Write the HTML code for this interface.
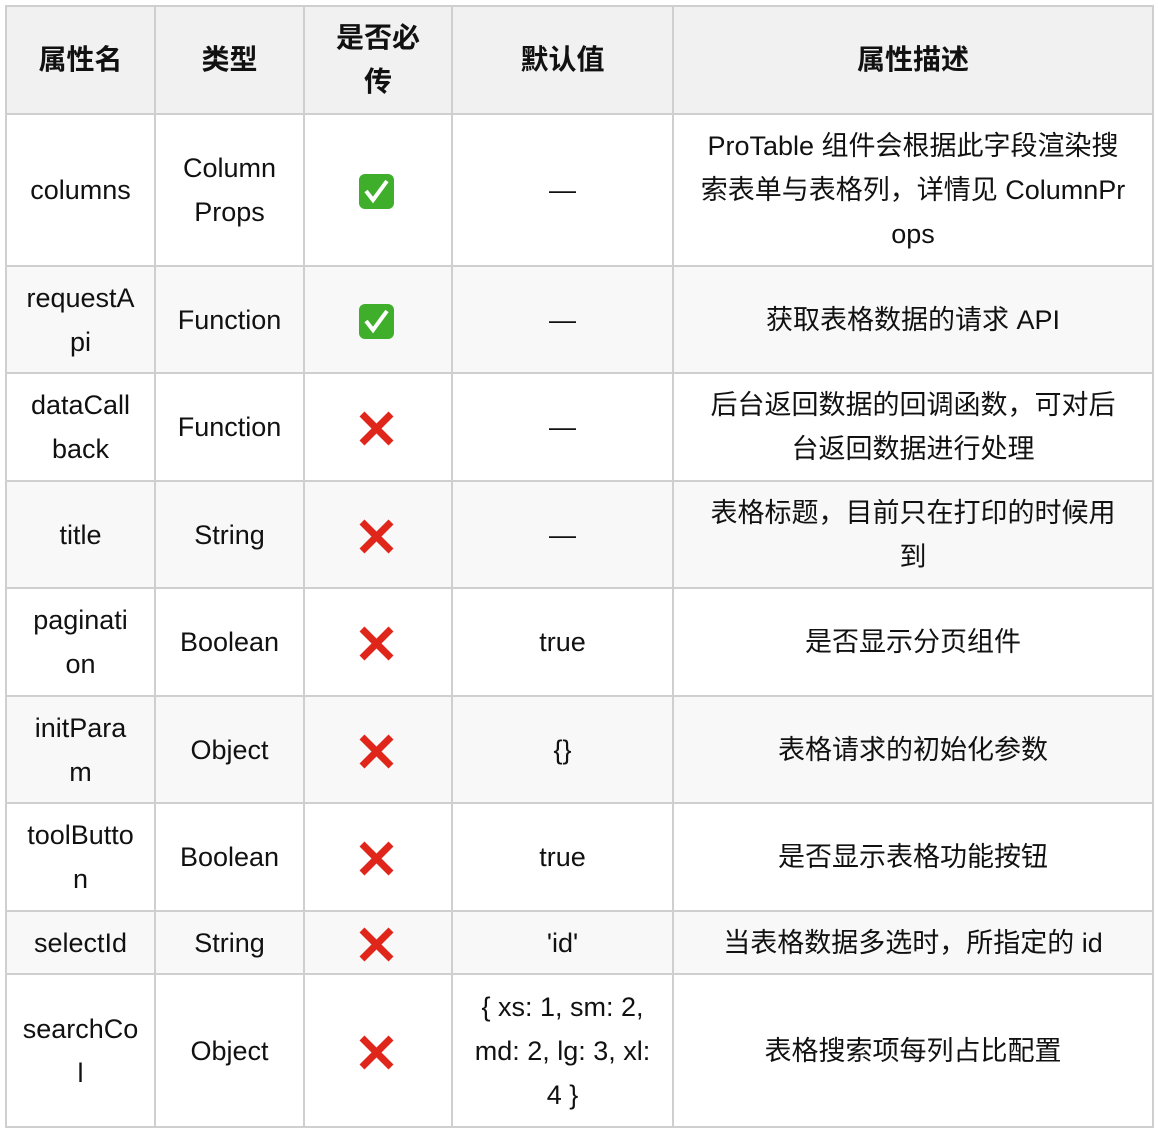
<!DOCTYPE html>
<html><head><meta charset="utf-8"><style>
body{margin:0;background:#fff;}
table{position:absolute;left:5px;top:5px;border-collapse:collapse;table-layout:fixed;width:1147px;font-family:"Liberation Sans","Noto Sans CJK SC",sans-serif;font-size:27px;color:#111;}
td,th{border:2px solid #cfcfcf;text-align:center;vertical-align:middle;padding:0;line-height:44px;white-space:nowrap;overflow:hidden;}
th{background:#f1f1f1;font-weight:bold;font-size:28px;}
tr.g td{background:#f8f8f8;}
.ck{display:inline-block;width:35px;height:35px;vertical-align:middle;margin-left:-4px}
</style></head><body>
<table>
<colgroup><col style="width:149px"><col style="width:149px"><col style="width:148px"><col style="width:221px"><col style="width:480px"></colgroup>
<tr style="height:108px"><th>属性名</th><th>类型</th><th>是否必<br>传</th><th>默认值</th><th>属性描述</th></tr>
<tr style="height:152px"><td>columns</td><td>Column<br>Props</td><td><svg class="ck" viewBox="0 0 35 35"><rect x="0" y="0" width="35" height="35" rx="6" fill="#3fae2a"/><path d="M7 17 L14 26 L28 7" stroke="#fff" stroke-width="4" fill="none"/></svg></td><td>—</td><td>ProTable 组件会根据此字段渲染搜<br>索表单与表格列，详情见 ColumnPr<br>ops</td></tr>
<tr class="g" style="height:107px"><td>requestA<br>pi</td><td>Function</td><td><svg class="ck" viewBox="0 0 35 35"><rect x="0" y="0" width="35" height="35" rx="6" fill="#3fae2a"/><path d="M7 17 L14 26 L28 7" stroke="#fff" stroke-width="4" fill="none"/></svg></td><td>—</td><td>获取表格数据的请求 API</td></tr>
<tr style="height:108px"><td>dataCall<br>back</td><td>Function</td><td><svg class="ck" viewBox="0 0 35 35"><path d="M3 3L32 32M32 3L3 32" stroke="#e0261b" stroke-width="7"/></svg></td><td>—</td><td>后台返回数据的回调函数，可对后<br>台返回数据进行处理</td></tr>
<tr class="g" style="height:107px"><td>title</td><td>String</td><td><svg class="ck" viewBox="0 0 35 35"><path d="M3 3L32 32M32 3L3 32" stroke="#e0261b" stroke-width="7"/></svg></td><td>—</td><td>表格标题，目前只在打印的时候用<br>到</td></tr>
<tr style="height:108px"><td>paginati<br>on</td><td>Boolean</td><td><svg class="ck" viewBox="0 0 35 35"><path d="M3 3L32 32M32 3L3 32" stroke="#e0261b" stroke-width="7"/></svg></td><td>true</td><td>是否显示分页组件</td></tr>
<tr class="g" style="height:107px"><td>initPara<br>m</td><td>Object</td><td><svg class="ck" viewBox="0 0 35 35"><path d="M3 3L32 32M32 3L3 32" stroke="#e0261b" stroke-width="7"/></svg></td><td>{}</td><td>表格请求的初始化参数</td></tr>
<tr style="height:108px"><td>toolButto<br>n</td><td>Boolean</td><td><svg class="ck" viewBox="0 0 35 35"><path d="M3 3L32 32M32 3L3 32" stroke="#e0261b" stroke-width="7"/></svg></td><td>true</td><td>是否显示表格功能按钮</td></tr>
<tr class="g" style="height:63px"><td>selectId</td><td>String</td><td><svg class="ck" viewBox="0 0 35 35"><path d="M3 3L32 32M32 3L3 32" stroke="#e0261b" stroke-width="7"/></svg></td><td>'id'</td><td>当表格数据多选时，所指定的 id</td></tr>
<tr style="height:153px"><td>searchCo<br>l</td><td>Object</td><td><svg class="ck" viewBox="0 0 35 35"><path d="M3 3L32 32M32 3L3 32" stroke="#e0261b" stroke-width="7"/></svg></td><td>{ xs: 1, sm: 2,<br>md: 2, lg: 3, xl:<br>4 }</td><td>表格搜索项每列占比配置</td></tr>
</table>
</body></html>
